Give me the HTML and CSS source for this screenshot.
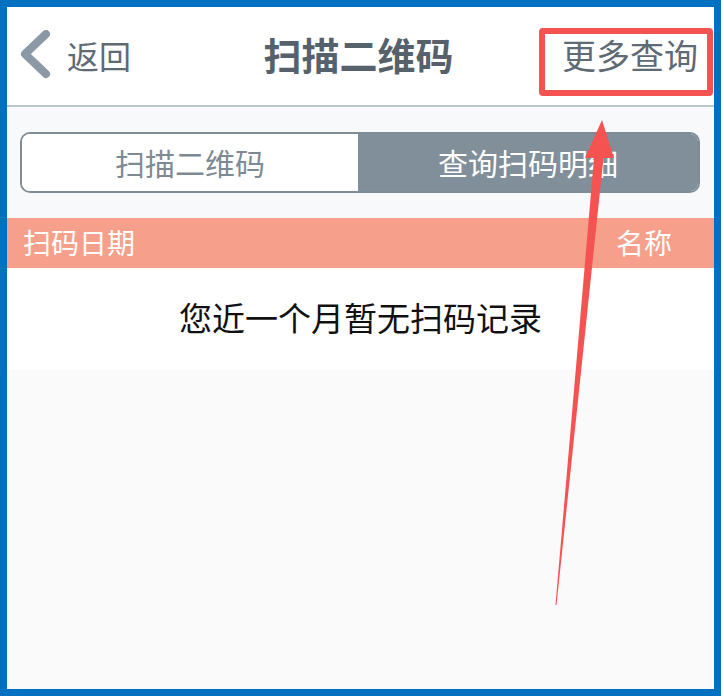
FILE: index.html
```html
<!DOCTYPE html>
<html lang="zh-CN">
<head>
<meta charset="utf-8">
<title>扫描二维码</title>
<link rel="stylesheet" href="styles.css">
</head>
<body>
<div class="frame">
  <header class="nav">
    <div class="back">
      <svg class="chev" width="42" height="52" viewBox="0 0 42 52"><polyline points="27,4 6,24 27,44" fill="none" stroke="#8a99a5" stroke-width="8" stroke-linecap="round" stroke-linejoin="round"/></svg>
      <span class="back-text">返回</span>
    </div>
    <div class="title">扫描二维码</div>
    <div class="more-wrap"><div class="more">更多查询</div></div>
  </header>
  <section class="tabs-area">
    <div class="seg">
      <div class="seg-item">扫描二维码</div>
      <div class="seg-item active">查询扫码明细</div>
    </div>
  </section>
  <div class="thead">
    <span>扫码日期</span>
    <span>名称</span>
  </div>
  <div class="empty">您近一个月暂无扫码记录</div>
  <div class="rest"></div>
</div>
<svg class="arrow" width="724" height="696" viewBox="0 0 724 696"><polygon points="602,120 614,158 603.5,158 556.5,605 555.5,605 594,158 585,158" fill="#f55252"/></svg>
</body>
</html>
```
FILE: styles.css
```css
html, body {
  margin: 0;
  padding: 0;
  background: #ffffff;
}
body {
  font-family: "Noto Sans CJK SC", "Noto Sans", sans-serif;
  width: 724px;
  height: 696px;
  position: relative;
  overflow: hidden;
}
.frame {
  box-sizing: border-box;
  width: 721px;
  height: 696px;
  border: 7px solid #0070c0;
  background: #fafafa;
  display: flex;
  flex-direction: column;
}
.nav {
  height: 98px;
  background: #ffffff;
  border-bottom: 2px solid #b9c6cb;
  display: grid;
  grid-template-columns: 1fr auto 1fr;
  align-items: center;
  flex-shrink: 0;
}
.back {
  display: flex;
  align-items: center;
  padding-left: 12px;
  color: #5e6a74;
  font-size: 32px;
  line-height: 40px;
}
.chev {
  display: block;
  margin-right: 6px;
  margin-top: 0;
}
.back-text {
  display: block;
  margin-top: -3px;
}
.title {
  font-size: 38px;
  font-weight: bold;
  color: #56616b;
  line-height: 44px;
  margin-top: -4px;
  margin-left: -4px;
}
.more-wrap {
  align-self: start;
  justify-self: end;
  margin-top: 21px;
  margin-right: 1px;
}
.more {
  border: 6px solid #f55252;
  border-radius: 4px;
  padding: 0 9px 15px 17px;
  padding-top: 1px;
  font-size: 34px;
  line-height: 40px;
  color: #5e6a74;
}
.tabs-area {
  background: #f8f9fa;
  padding: 25px 14px 25px 13px;
  flex-shrink: 0;
}
.seg {
  display: flex;
  height: 61px;
  box-sizing: border-box;
  border: 2px solid #7f8c96;
  border-radius: 10px;
  overflow: hidden;
}
.seg-item {
  flex: 338 1 0;
  display: flex;
  align-items: center;
  justify-content: center;
  background: #ffffff;
  color: #7d8a94;
  font-size: 30px;
  padding-bottom: 2px;
}
.seg-item.active {
  flex: 342 1 0;
  background: #818f9b;
  color: #ffffff;
}
.thead {
  height: 48px;
  background: #f6a08c;
  color: #ffffff;
  font-size: 28px;
  display: flex;
  justify-content: space-between;
  align-items: center;
  padding: 0 42px 2px 16px;
  flex-shrink: 0;
}
.empty {
  height: 102px;
  background: #ffffff;
  color: #111111;
  font-size: 33px;
  display: flex;
  align-items: center;
  justify-content: center;
  padding-bottom: 4px;
  box-sizing: border-box;
  flex-shrink: 0;
}
.rest {
  flex: 1;
  background: #fafafa;
}
.arrow {
  position: absolute;
  left: 0;
  top: 0;
  pointer-events: none;
}
```
